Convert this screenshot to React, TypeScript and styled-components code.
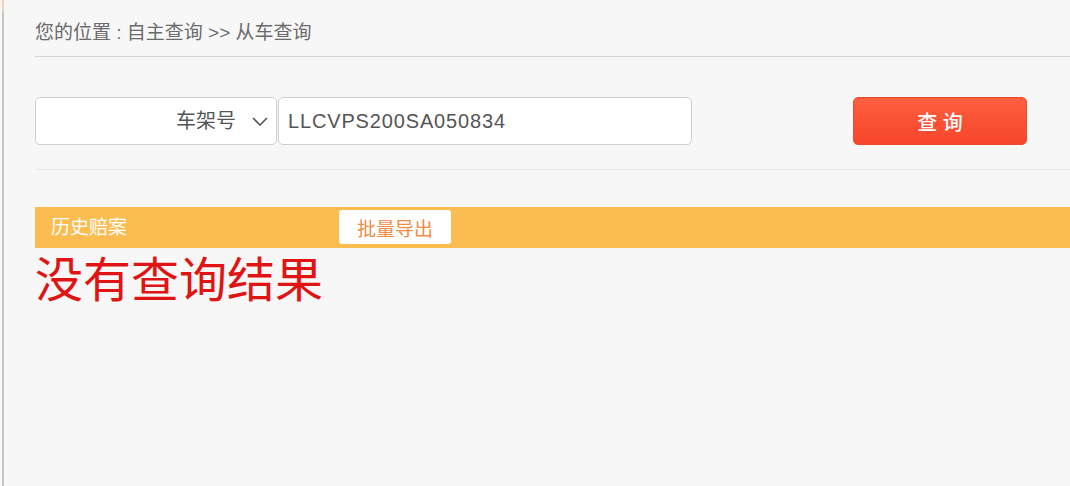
import React from "react";
import styled, { createGlobalStyle } from "styled-components";

const Global = createGlobalStyle`
  html, body { margin: 0; padding: 0; background: #f7f7f7; }
  body { font-family: "Liberation Sans", "Noto Sans CJK SC", sans-serif; }
  * { box-sizing: border-box; }
`;

const Frame = styled.div`
  display: flex;
  min-height: 486px;
  padding-left: 2px;
  background: #f7f7f7;
`;

const Rail = styled.div`
  width: 2px;
  flex: none;
  background: linear-gradient(#f6cfa8 0, #f2d9c4 8px, #c6c6c6 14px, #c6c6c6 100%);
`;

const Content = styled.div`
  flex: 1;
  padding-left: 31px;
  display: flex;
  flex-direction: column;
`;

const Breadcrumb = styled.div`
  padding: 21px 0 11px 0;
  font-size: 19px;
  line-height: 24px;
  color: #6a6a6a;
  border-bottom: 1px solid #d6d6d6;
`;

const SearchRow = styled.div`
  display: flex;
  align-items: center;
  padding: 40px 0 24px 0;
  border-bottom: 1px solid #e8e8e8;
`;

const SelectBox = styled.div`
  width: 242px;
  height: 48px;
  background: #fff;
  border: 1px solid #cfcfcf;
  border-radius: 5px;
  display: flex;
  align-items: center;
  justify-content: flex-end;
  gap: 16px;
  padding-right: 8px;
  font-size: 20px;
  color: #555;
`;

const SelectLabel = styled.span`
  line-height: 24px;
`;

const InputBox = styled.div`
  width: 414px;
  height: 48px;
  margin-left: 1px;
  background: #fff;
  border: 1px solid #cfcfcf;
  border-radius: 5px;
  display: flex;
  align-items: center;
  padding-left: 9px;
  font-size: 20px;
  letter-spacing: 0.85px;
  color: #555;
`;

const QueryButton = styled.button`
  margin-left: 161px;
  width: 174px;
  height: 48px;
  border: 1px solid #ec4a30;
  border-radius: 5px;
  background: linear-gradient(#ff5f40, #f6452a);
  color: #fff;
  font-family: inherit;
  font-size: 20px;
  font-weight: 500;
  display: flex;
  align-items: center;
  justify-content: center;
  padding: 0;
`;

const Bar = styled.div`
  margin-top: 37px;
  height: 41px;
  background: #fbbd4f;
  display: flex;
  align-items: center;
  padding-left: 16px;
`;

const BarTitle = styled.span`
  width: 288px;
  color: #fff;
  font-size: 19px;
  line-height: 24px;
`;

const ExportButton = styled.button`
  width: 112px;
  height: 34px;
  margin-top: -1px;
  background: #fff;
  border: none;
  border-radius: 3px;
  color: #f08c45;
  font-family: inherit;
  font-size: 19px;
  padding: 0;
`;

const Empty = styled.div`
  margin-top: 9px;
  font-size: 48px;
  line-height: 48px;
  color: #e01414;
`;

const Chevron = () => (
  <svg width="16" height="9" viewBox="0 0 16 9" fill="none">
    <polyline points="1,1 8,8 15,1" stroke="#555" strokeWidth="1.6" />
  </svg>
);

export default function App() {
  return (
    <>
      <Global />
      <Frame>
        <Rail />
        <Content>
          <Breadcrumb>您的位置 : 自主查询 &gt;&gt; 从车查询</Breadcrumb>
          <SearchRow>
            <SelectBox>
              <SelectLabel>车架号</SelectLabel>
              <Chevron />
            </SelectBox>
            <InputBox>LLCVPS200SA050834</InputBox>
            <QueryButton>查 询</QueryButton>
          </SearchRow>
          <Bar>
            <BarTitle>历史赔案</BarTitle>
            <ExportButton>批量导出</ExportButton>
          </Bar>
          <Empty>没有查询结果</Empty>
        </Content>
      </Frame>
    </>
  );
}
